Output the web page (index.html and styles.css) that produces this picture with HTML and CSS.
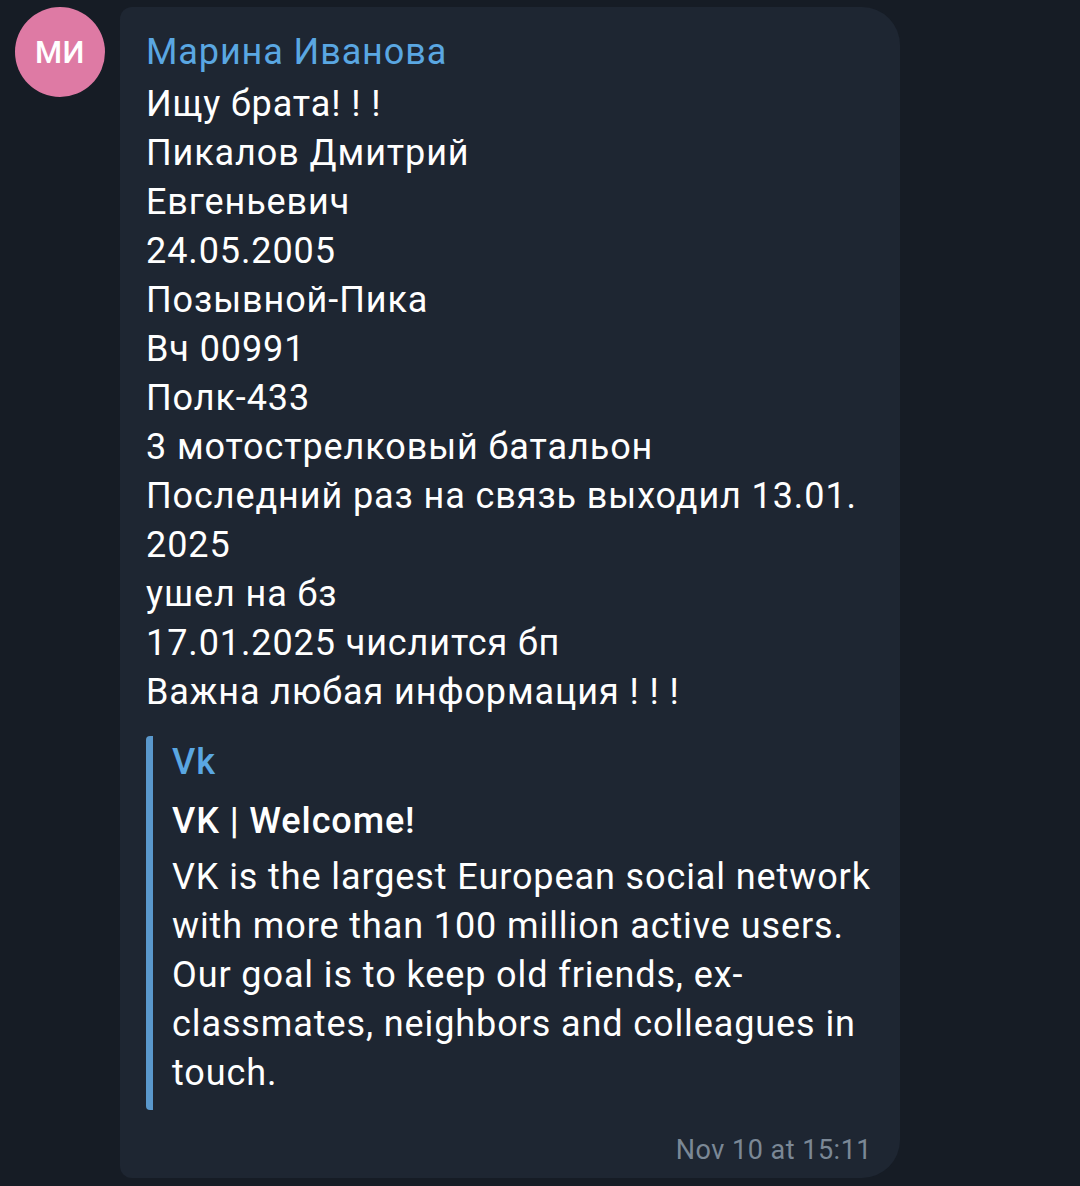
FILE: index.html
```html
<!DOCTYPE html>
<html lang="ru">
<head>
<meta charset="utf-8">
<link rel="stylesheet" href="styles.css">
</head>
<body>
<div class="row">
  <div class="avatar">МИ</div>
  <div class="bubble">
    <div class="name">Марина Иванова</div>
    <div class="text">Ищу брата! ! !<br>Пикалов Дмитрий<br>Евгеньевич<br>24.05.2005<br>Позывной-Пика<br>Вч 00991<br>Полк-433<br>3 мотострелковый батальон<br>Последний раз на связь выходил 13.01.<br>2025<br>ушел на бз<br>17.01.2025 числится бп<br>Важна любая информация ! ! !</div>
    <div class="preview">
      <div class="site">Vk</div>
      <div class="title">VK | Welcome!</div>
      <div class="desc">VK is the largest European social network<br>with more than 100 million active users.<br>Our goal is to keep old friends, ex-<br>classmates, neighbors and colleagues in<br>touch.</div>
    </div>
    <div class="time">Nov 10 at 15:11</div>
  </div>
</div>
</body>
</html>
```
FILE: styles.css
```css
html, body {
  margin: 0;
  padding: 0;
  background: #161c25;
}
body {
  font-family: Roboto, "Noto Sans", sans-serif;
  color: #ffffff;
  width: 1080px;
  height: 1186px;
  overflow: hidden;
}
.row {
  display: flex;
  align-items: flex-start;
  padding: 7px 0 0 15px;
  gap: 15px;
}
.avatar {
  flex: none;
  width: 90px;
  height: 90px;
  border-radius: 50%;
  background: #de7aa4;
  color: #ffffff;
  font-size: 31px;
  font-weight: 500;
  display: flex;
  align-items: center;
  justify-content: center;
  letter-spacing: 0.5px;
}
.bubble {
  box-sizing: border-box;
  width: 780px;
  background: #1e2632;
  border-radius: 12px 38px 38px 12px;
  padding: 21px 20px 10px 26px;
}
.name,
.text,
.site,
.title,
.desc {
  font-size: 36px;
  line-height: 49px;
  letter-spacing: 0.9px;
}
.name {
  color: #5aa7e2;
  margin-bottom: 3px;
}
.preview {
  margin-top: 19px;
  border-left: 7px solid #5a98cc;
  border-radius: 4px;
  padding: 2px 0 12px 19px;
}
.site {
  font-weight: 500;
  color: #5aa7e2;
}
.title {
  margin-top: 10px;
  font-weight: 500;
}
.desc {
  margin-top: 7px;
}
.time {
  margin-top: 22px;
  margin-right: 8px;
  text-align: right;
  font-size: 27px;
  line-height: 36px;
  letter-spacing: 0.5px;
  color: #7b8896;
}
```
